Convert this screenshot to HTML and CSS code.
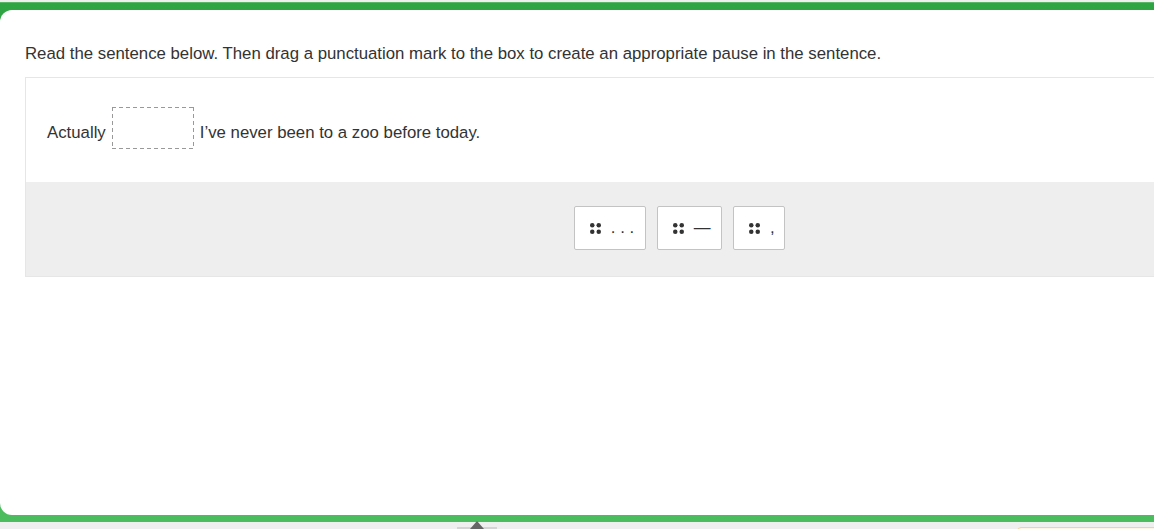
FILE: index.html
```html
<!DOCTYPE html>
<html lang="en">
<head>
<meta charset="utf-8">
<title>Punctuation drag and drop</title>
<link rel="stylesheet" href="styles.css">
</head>
<body>
<div class="page">
  <div class="frame">
    <div class="card">
      <p class="instruction">Read the sentence below. Then drag a punctuation mark to the box to create an appropriate pause in the sentence.</p>
      <div class="question">
        <div class="sentence">
          <span class="word">Actually</span>
          <span class="blank"></span>
          <span class="word">I’ve never been to a zoo before today.</span>
        </div>
        <div class="bank">
          <div class="tile">
            <svg class="grip" width="11" height="11" viewBox="0 0 11 11"><circle cx="2.25" cy="2.25" r="2.25"/><circle cx="8.75" cy="2.25" r="2.25"/><circle cx="2.25" cy="8.75" r="2.25"/><circle cx="8.75" cy="8.75" r="2.25"/></svg>
            <span>. . .</span>
          </div>
          <div class="tile">
            <svg class="grip" width="11" height="11" viewBox="0 0 11 11"><circle cx="2.25" cy="2.25" r="2.25"/><circle cx="8.75" cy="2.25" r="2.25"/><circle cx="2.25" cy="8.75" r="2.25"/><circle cx="8.75" cy="8.75" r="2.25"/></svg>
            <span>—</span>
          </div>
          <div class="tile">
            <svg class="grip" width="11" height="11" viewBox="0 0 11 11"><circle cx="2.25" cy="2.25" r="2.25"/><circle cx="8.75" cy="2.25" r="2.25"/><circle cx="2.25" cy="8.75" r="2.25"/><circle cx="8.75" cy="8.75" r="2.25"/></svg>
            <span>,</span>
          </div>
        </div>
      </div>
    </div>
  </div>
  <div class="footer">
    <div class="toggle"></div>
    <div class="next"></div>
  </div>
</div>
</body>
</html>
```
FILE: styles.css
```css
html, body {
  margin: 0;
  padding: 0;
}
body {
  width: 1154px;
  height: 529px;
  overflow: hidden;
  background: #efefef;
  font-family: "Liberation Sans", Arial, sans-serif;
  color: #333;
}
.page {
  width: 1359px;
  padding-top: 2px;
}
.frame {
  background: linear-gradient(#2ea443 0%, #3cae50 50%, #4cbd5e 100%);
  border-top: 1px solid #56b866;
  padding: 7px 0 7px;
}
.card {
  background: #fff;
  border-radius: 12px;
  height: 505px;
  box-sizing: border-box;
  padding: 32px 0 0 25px;
}
.instruction {
  font-size: 16.8px;
  line-height: 24px;
  margin: 0 0 11px;
}
.question {
  width: 1309px;
  box-sizing: border-box;
  border: 1px solid #e6e6e6;
}
.sentence {
  display: flex;
  align-items: center;
  gap: 6px;
  padding: 29px 21px 33px;
  font-size: 16.8px;
  line-height: 24px;
}
.word {
  margin-top: 10px;
}
.blank {
  flex: none;
  width: 82px;
  height: 42px;
  background:
    linear-gradient(90deg, #999 4px, transparent 4px) left top / 7px 1px repeat-x,
    linear-gradient(90deg, #999 4px, transparent 4px) left bottom / 7px 1px repeat-x,
    linear-gradient(#999 4px, transparent 4px) left top / 1px 7px repeat-y,
    linear-gradient(#999 4px, transparent 4px) right top / 1px 7px repeat-y;
}
.bank {
  background: #eeeeee;
  display: flex;
  justify-content: center;
  gap: 11px;
  padding: 24px 0 26px;
}
.tile {
  display: flex;
  align-items: center;
  gap: 10px;
  height: 44px;
  box-sizing: border-box;
  padding: 0 10.5px 0 15px;
  background: #fff;
  border: 1px solid #c3c3c3;
  border-radius: 2px;
  font-size: 16.8px;
  line-height: 24px;
  color: #333;
}
.tile:last-child {
  padding-right: 9.5px;
}
.grip {
  fill: #333;
  flex: none;
}
.footer {
  display: flex;
  height: 7px;
}
.toggle {
  position: relative;
  margin-left: 457px;
  margin-top: 5px;
  width: 40px;
  height: 2px;
  background: #d4d4d4;
}
.toggle::before {
  content: "";
  position: absolute;
  left: 13px;
  top: -6px;
  border-left: 7px solid transparent;
  border-right: 7px solid transparent;
  border-bottom: 8px solid #666;
}
.next {
  margin-left: 520px;
  margin-top: 5px;
  width: 200px;
  height: 10px;
  box-sizing: border-box;
  background: #fdf5e8;
  border: 1px solid #f2d29e;
  border-radius: 4px;
}
```
